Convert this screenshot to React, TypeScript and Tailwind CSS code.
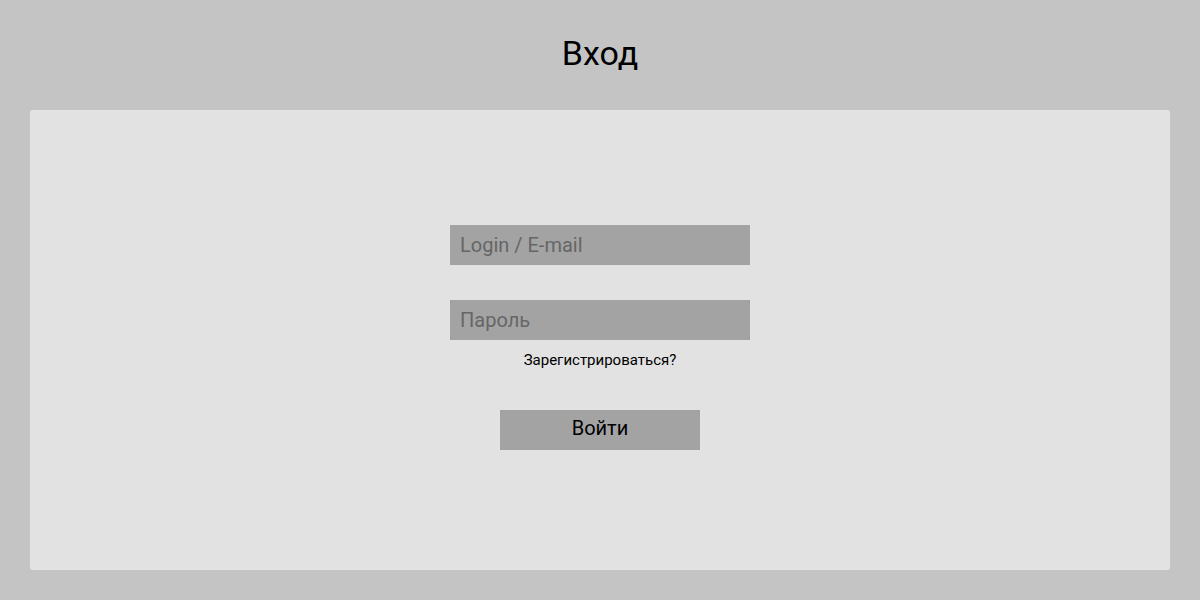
export default function App() {
  return (
    <div className="w-[1200px] h-[600px] bg-[#c4c4c4] flex flex-col font-['Roboto',sans-serif]">
      <div className="h-[110px] flex items-center justify-center">
        <h1 className="text-[34px] leading-none text-black -mt-[4px]">Вход</h1>
      </div>
      <div className="mx-[30px] h-[460px] bg-[#e2e2e2] rounded-[2px] flex flex-col items-center pt-[115px]">
        <input
          className="w-[300px] h-[40px] bg-[#a3a3a3] px-[10px] text-[20px] text-black placeholder:text-[#666666] outline-none"
          placeholder="Login / E-mail"
        />
        <input
          type="password"
          className="mt-[35px] w-[300px] h-[40px] bg-[#a3a3a3] px-[10px] text-[20px] text-black placeholder:text-[#666666] outline-none"
          placeholder="Пароль"
        />
        <a className="mt-[10px] text-[15px] leading-[20px] text-black">Зарегистрироваться?</a>
        <button className="mt-[40px] w-[200px] h-[40px] bg-[#a3a3a3] text-[20px] leading-none text-black pb-[4px]">
          Войти
        </button>
      </div>
    </div>
  );
}
